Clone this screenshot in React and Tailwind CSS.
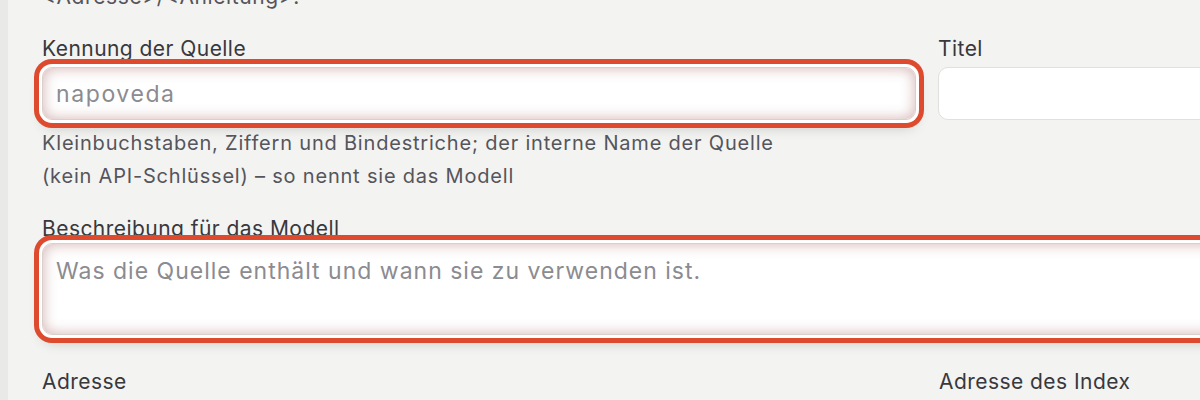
const focusRing =
  'shadow-[0_0_0_3px_#ffffff,0_0_0_8px_#dd4a2d,0_7px_14px_rgba(0,0,0,0.2),inset_0_0_14px_rgba(150,70,70,0.42)]'

const Field = ({ label, children, className = '' }) => (
  <div className={'flex flex-col ' + className}>
    <label className="text-[21px] leading-[28px] tracking-[0.45px] text-[#38383d] h-[28px] mb-[4px]">
      {label}
    </label>
    {children}
  </div>
)

export default function App() {
  return (
    <div className="flex h-[400px] w-[1200px] overflow-hidden bg-[#ebebe9]" style={{ fontFamily: 'Inter, "Noto Sans", sans-serif' }}>
      <div className="w-[8px] shrink-0 bg-[#e9e9e7]" />
      <div className="w-[1400px] shrink-0 bg-[#f3f3f1] pl-[34px]">
        <p className="-mt-[17px] text-[21px] leading-[28px] tracking-[0.6px] text-[#55555c]">
          &lt;Adresse&gt;/&lt;Anleitung&gt;.
        </p>

        <div className="mt-[24px] grid grid-cols-[874px_420px] gap-x-[22px]">
          <Field label="Kennung der Quelle">
            <input
              placeholder="napoveda"
              className={
                'h-[53px] rounded-[10px] border border-[#d9cfcb] bg-white px-[13px] text-[23px] tracking-[1.6px] text-[#3f3f44] placeholder:text-[#8b8b90] outline-none ' +
                focusRing
              }
            />
            <p className="mt-[7px] text-[20px] leading-[33px] tracking-[0.8px] text-[#55555c]">
              Kleinbuchstaben, Ziffern und Bindestriche; der interne Name der Quelle
              <br />
              (kein API-Schlüssel) – so nennt sie das Modell
            </p>
          </Field>
          <Field label="Titel">
            <input className="h-[53px] rounded-[10px] border border-[#e0e0dc] bg-white px-[13px] text-[22px] outline-none" />
          </Field>
        </div>

        <div className="mt-[22px] flex flex-col">
          <label className="text-[21px] leading-[28px] tracking-[0.45px] text-[#38383d] mb-[0px]">
            Beschreibung für das Modell
          </label>
          <textarea
            rows={3}
            placeholder="Was die Quelle enthält und wann sie zu verwenden ist."
            className={
              'block h-[92px] w-[1300px] resize-none rounded-[10px] border border-[#d9cfcb] bg-white px-[13px] pt-[12px] text-[23px] leading-[30px] tracking-[1px] text-[#3f3f44] placeholder:text-[#8b8b90] outline-none ' +
              focusRing
            }
          />
        </div>

        <div className="mt-[33px] grid grid-cols-[864px_420px] gap-x-[33px]">
          <Field label="Adresse">
            <input className="ml-[8px] h-[53px] rounded-[10px] border border-[#e0e0dc] bg-white outline-none" />
          </Field>
          <Field label="Adresse des Index">
            <input className="ml-[8px] h-[53px] rounded-[10px] border border-[#e0e0dc] bg-white outline-none" />
          </Field>
        </div>
      </div>
    </div>
  )
}
